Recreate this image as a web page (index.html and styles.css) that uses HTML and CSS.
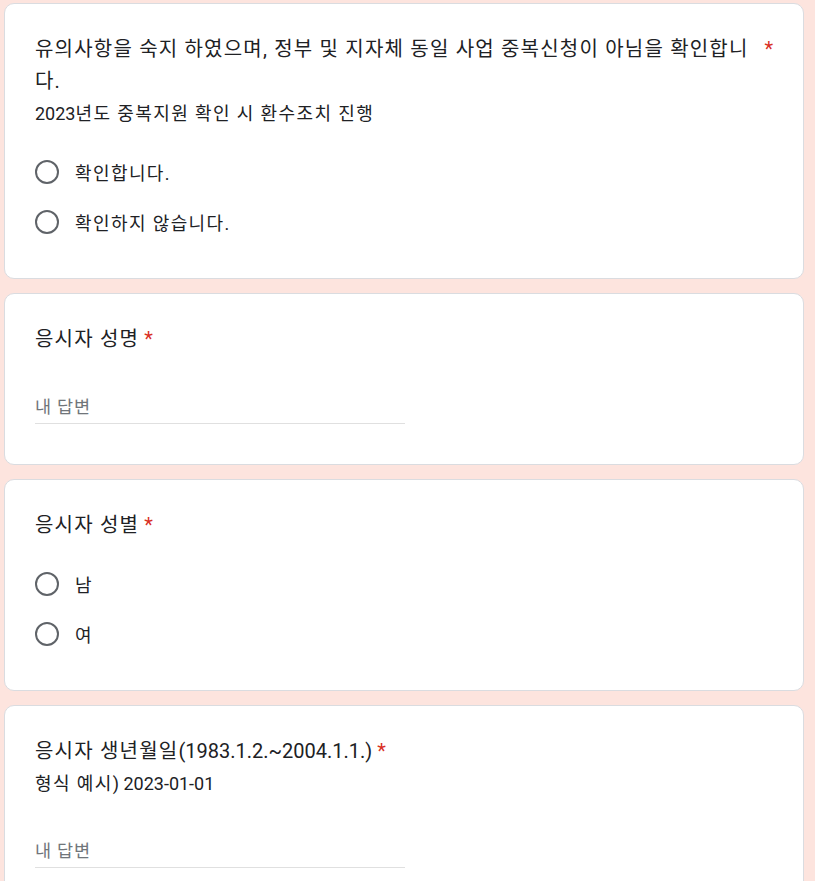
FILE: index.html
```html
<!DOCTYPE html>
<html lang="ko">
<head>
  <meta charset="UTF-8">
  <title>신청서</title>
  <link rel="stylesheet" href="styles.css">
</head>
<body>

  <div class="form">

    <div class="card">
      <div class="title">
        <span class="title-text">유의사항을 숙지 하였으며, 정부 및 지자체 동일 사업 중복신청이 아님을 확인합니다.</span>
        <span class="req">*</span>
      </div>
      <div class="desc"><span class="num">2023</span>년도 중복지원 확인 시 환수조치 진행</div>
      <div class="options">
        <label class="option"><span class="radio"></span>확인합니다.</label>
        <label class="option"><span class="radio"></span>확인하지 않습니다.</label>
      </div>
    </div>

    <div class="card">
      <div class="title">
        <span class="title-text">응시자 성명</span>
        <span class="req">*</span>
      </div>
      <div class="answer">내 답변</div>
    </div>

    <div class="card">
      <div class="title">
        <span class="title-text">응시자 성별</span>
        <span class="req">*</span>
      </div>
      <div class="options no-desc">
        <label class="option"><span class="radio"></span>남</label>
        <label class="option"><span class="radio"></span>여</label>
      </div>
    </div>

    <div class="card">
      <div class="title">
        <span class="title-text">응시자 생년월일<span class="num">(1983.1.2.~2004.1.1.)</span></span>
        <span class="req">*</span>
      </div>
      <div class="desc">형식 예시<span class="num">) 2023-01-01</span></div>
      <div class="answer after-desc">내 답변</div>
    </div>

  </div>

</body>
</html>
```

FILE: styles.css
```css
body {
  margin: 0;
  background: #fde4de;
  color: #202124;
  font-family: Roboto, 'Noto Sans CJK KR', sans-serif;
}

.form {
  width: 800px;
  padding: 3px 0 0 4px;
  display: flex;
  flex-direction: column;
  gap: 14px;
}

.card {
  background: #fff;
  border: 1px solid #dadce0;
  border-radius: 10px;
  padding: 29px 30px 31px;
}

/* hangul is a bit wider in the original, roboto parts are not */
.num {
  letter-spacing: 0;
}

.title {
  display: flex;
  font-size: 20px;
  line-height: 32px;
  letter-spacing: 1.2px;
}

.title-text {
  flex: 0 1 auto;
}

.req {
  color: #d93025;
  padding-left: 5px;
  letter-spacing: 0;
  flex: none;
}

.desc {
  font-size: 18px;
  line-height: 26px;
  letter-spacing: 1.4px;
  margin-top: 4px;
}

.options {
  margin-top: 20px;
}

.options.no-desc {
  margin-top: 18px;
}

.option {
  display: flex;
  align-items: center;
  height: 50px;
  font-size: 18px;
  letter-spacing: 1.4px;
}

.radio {
  width: 20px;
  height: 20px;
  border: 2.5px solid #5f6368;
  border-radius: 50%;
  margin-right: 16px;
  flex: none;
}

.answer {
  width: 370px;
  height: 36px;
  margin: 32px 0 9px;
  display: flex;
  align-items: center;
  border-bottom: 1px solid #e0e0e0;
  color: #70757a;
  font-size: 17.5px;
  letter-spacing: 0.8px;
}

.answer.after-desc {
  margin-top: 34px;
}
```
